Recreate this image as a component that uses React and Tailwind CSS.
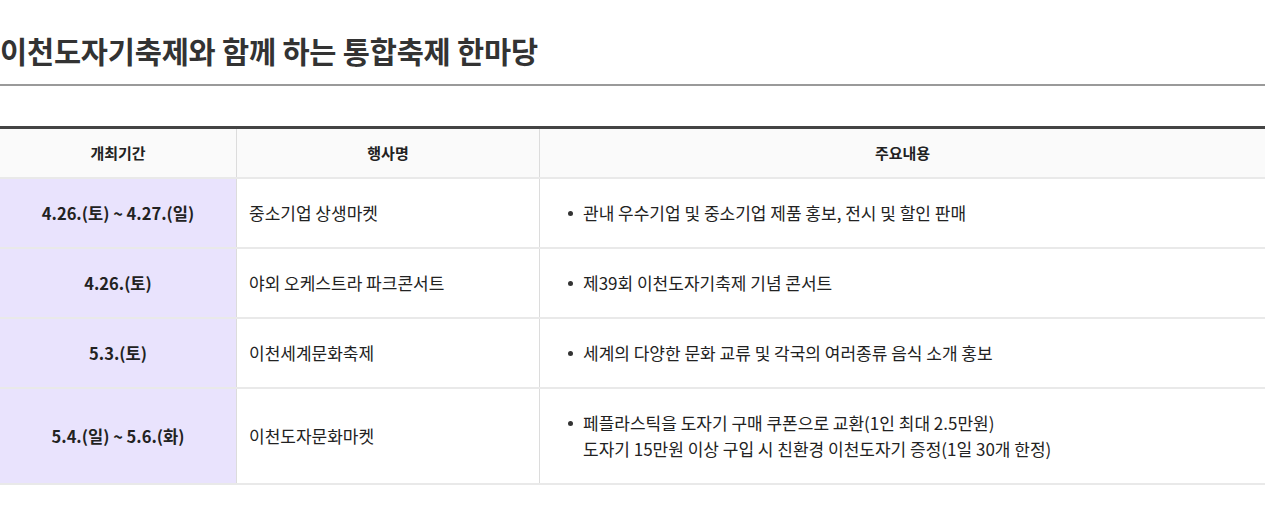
const rows = [
  {
    date: "4.26.(토) ~ 4.27.(일)",
    name: "중소기업 상생마켓",
    lines: ["관내 우수기업 및 중소기업 제품 홍보, 전시 및 할인 판매"],
    h: "h-[70px]",
  },
  {
    date: "4.26.(토)",
    name: "야외 오케스트라 파크콘서트",
    lines: ["제39회 이천도자기축제 기념 콘서트"],
    h: "h-[70px]",
  },
  {
    date: "5.3.(토)",
    name: "이천세계문화축제",
    lines: ["세계의 다양한 문화 교류 및 각국의 여러종류 음식 소개 홍보"],
    h: "h-[70px]",
  },
  {
    date: "5.4.(일) ~ 5.6.(화)",
    name: "이천도자문화마켓",
    lines: [
      "페플라스틱을 도자기 구매 쿠폰으로 교환(1인 최대 2.5만원)",
      "도자기 15만원 이상 구입 시 친환경 이천도자기 증정(1일 30개 한정)",
    ],
    h: "h-[96px]",
  },
];

const App = () => {
  return (
    <div
      className="w-[1265px] h-[511px] bg-white overflow-hidden text-[#222]"
      style={{ fontFamily: '"Noto Sans CJK KR", "Noto Sans", sans-serif' }}
    >
      {/* 제목 */}
      <div className="pt-[30px] pb-[14px] border-b-2 border-[#9a9a9a]">
        <h2 className="text-[29.5px] leading-[40px] font-bold text-[#333] tracking-[-0.2px]">
          이천도자기축제와 함께 하는 통합축제 한마당
        </h2>
      </div>

      {/* 표 */}
      <div className="mt-[40px] border-t-[3px] border-[#444]">
        <div className="grid grid-cols-[237px_303px_1fr] h-[50px] bg-[#fafafa] border-b-2 border-[#e9e9e9] text-[15px] font-bold">
          <div className="flex items-center justify-center border-r border-[#dcdcdc]">개최기간</div>
          <div className="flex items-center justify-center border-r border-[#dcdcdc]">행사명</div>
          <div className="flex items-center justify-center">주요내용</div>
        </div>

        {rows.map((row, index) => (
          <div
            key={index}
            className={`grid grid-cols-[237px_303px_1fr] ${row.h} border-b-2 border-[#e9e9e9] text-[17px]`}
          >
            <div className="flex items-center justify-center bg-[#e9e3fd] border-r border-[#dcdcdc] font-bold text-[16.5px]">
              {row.date}
            </div>
            <div className="flex items-center pl-[12px] border-r border-[#dcdcdc]">{row.name}</div>
            <div className="flex items-center pl-[28px]">
              <div className="flex gap-[10px]">
                <span className="mt-[11px] w-[5px] h-[5px] rounded-full bg-[#333] shrink-0" />
                <div className="leading-[26px]">
                  {row.lines.map((line, i) => (
                    <div key={i}>{line}</div>
                  ))}
                </div>
              </div>
            </div>
          </div>
        ))}
      </div>
    </div>
  );
};

export default App;
